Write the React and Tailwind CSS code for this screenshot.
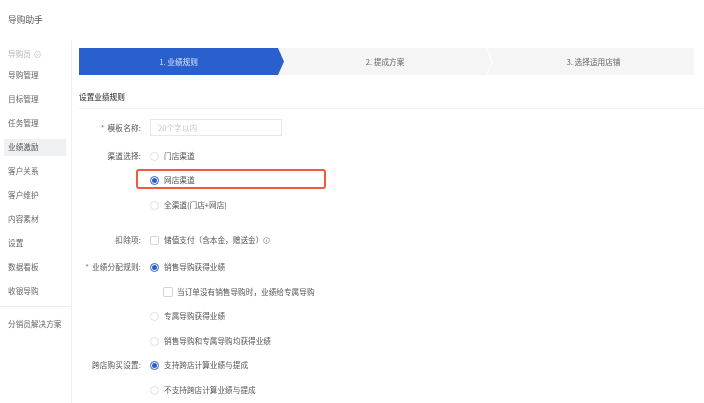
import React from "react";

const font = { fontFamily: '"Noto Sans CJK SC", "Noto Sans", sans-serif' };

function Radio({ on }) {
  return on ? (
    <span className="flex h-[9px] w-[9px] shrink-0 items-center justify-center rounded-full border border-[#2a5fce] bg-white">
      <span className="h-[5px] w-[5px] rounded-full bg-[#2a5fce]" />
    </span>
  ) : (
    <span className="h-[9px] w-[9px] shrink-0 rounded-full border border-[#e0e0e0] bg-white" />
  );
}

function Check({ big }) {
  return <span className={`block shrink-0 rounded-[1px] border border-[#d5d5d5] bg-white ${big ? "h-[10px] w-[10px]" : "h-[9px] w-[9px]"}`} />;
}

function Row({ label, star, mt, children }) {
  return (
    <div className={`flex h-[16px] items-center ${mt}`}>
      <div className="flex w-[62px] shrink-0 items-center justify-end whitespace-nowrap tracking-[0.15px] text-[#555]">
        {star && <span className="mr-[3px] text-[#e5484d]">*</span>}
        {label}
      </div>
      <div className="ml-[9px] flex items-center gap-[5px] whitespace-nowrap text-[#555]">{children}</div>
    </div>
  );
}

const nav = ["导购管理", "目标管理", "任务管理", "业绩激励", "客户关系", "客户维护", "内容素材", "设置", "数据看板", "收银导购"];

export default function App() {
  return (
    <div className="h-[403px] w-[704px] overflow-hidden bg-white text-[7.65px] leading-none blur-[0.3px]" style={font}>
      <div className="flex h-[40px] items-center pl-2 pt-px text-[8.7px] text-[#555]">导购助手</div>
      <div className="flex h-[363px]">
        <aside className="w-[72px] shrink-0 border-r border-[#f0f0f0] text-[#666]">
          <div className="flex h-[23px] items-center gap-[3px] pl-2 pt-[5px] text-[#b5b5b5]">
            导购员
            <svg width="7" height="7" viewBox="0 0 7 7" fill="none" stroke="#b5b5b5" strokeWidth="0.6">
              <circle cx="3.5" cy="3.5" r="3" />
              <path d="M2.1 3 3.5 4.4 4.9 3" />
            </svg>
          </div>
          {nav.map((n) => (
            <div key={n} className="flex h-[24px] items-center pl-1">
              <div className={`flex h-[17px] w-[62px] items-center pl-1 ${n === "业绩激励" ? "bg-[#eef0f4] text-[#555]" : ""}`}>{n}</div>
            </div>
          ))}
          <div className="mt-[3px] border-t border-[#eeeeee]" />
          <div className="flex h-[34px] items-center pl-2">分销员解决方案</div>
        </aside>

        <main className="relative min-w-0 flex-1 pl-[7px]">
          <div className="mt-2 flex h-[27px] w-[615px] text-[#666]">
            <div className="relative z-10 flex w-[205px] items-center justify-center bg-[#2a5fce] pr-[6px] text-[#dce6fa] [clip-path:polygon(0_0,199px_0,100%_50%,199px_100%,0_100%)]">
              1. 业绩规则
            </div>
            <div className="-ml-[6px] flex w-[214px] items-center justify-center bg-[#f5f5f5] pl-[6px] pr-[6px] [clip-path:polygon(0_0,208px_0,100%_50%,208px_100%,0_100%)]">
              2. 提成方案
            </div>
            <div className="-ml-[5px] flex w-[207px] items-center justify-center bg-[#f5f5f5] pl-[6px] [clip-path:polygon(0_0,100%_0,100%_100%,0_100%,6px_50%)]">
              3. 选择适用店铺
            </div>
          </div>

          <div className="mt-[14px] h-[20px] border-b border-[#f2f2f2] pt-[4px] font-medium text-[#444]">设置业绩规则</div>

          <div className="mt-[10px] flex flex-col">
            <div className="flex h-[17px] items-center">
              <div className="flex w-[62px] shrink-0 items-center justify-end whitespace-nowrap tracking-[0.15px] text-[#555]">
                <span className="mr-[3px] text-[#e5484d]">*</span>模板名称:
              </div>
              <div className="ml-[9px] flex h-[17px] w-[132px] items-center border border-[#e8e8e8] pl-[7px] text-[#c8c8c8]">20个字以内</div>
            </div>
            <Row label="渠道选择:" mt="mt-[12px]"><Radio />门店渠道</Row>
            <Row label="" mt="mt-[8px]"><Radio on />网店渠道</Row>
            <Row label="" mt="mt-[9px]"><Radio />全渠道(门店+网店)</Row>
            <Row label="扣除项:" mt="mt-[19px]">
              <Check />储值支付（含本金，赠送金）
              <svg className="-ml-[5px]" width="7" height="7" viewBox="0 0 7 7" fill="none" stroke="#777" strokeWidth="0.6">
                <circle cx="3.5" cy="3.5" r="3" />
                <path d="M3.5 3v2M3.5 1.8v.6" />
              </svg>
            </Row>
            <Row label="业绩分配规则:" star mt="mt-[11px]"><Radio on />销售导购获得业绩</Row>
            <Row label="" mt="mt-[9px]">
              <span className="ml-[13px] flex"><Check big /></span>
              <span className="-ml-[1px]">当订单没有销售导购时，业绩给专属导购</span>
            </Row>
            <Row label="" mt="mt-[8px]"><Radio />专属导购获得业绩</Row>
            <Row label="" mt="mt-[9px]"><Radio />销售导购和专属导购均获得业绩</Row>
            <Row label="跨店购买设置:" mt="mt-[8px]"><Radio on />支持跨店计算业绩与提成</Row>
            <Row label="" mt="mt-[9px]"><Radio />不支持跨店计算业绩与提成</Row>
          </div>

          <div className="absolute left-[64px] top-[129px] h-[20px] w-[190px] rounded-[3px] border-2 border-[#ef5a3c]" />
        </main>
      </div>
    </div>
  );
}
